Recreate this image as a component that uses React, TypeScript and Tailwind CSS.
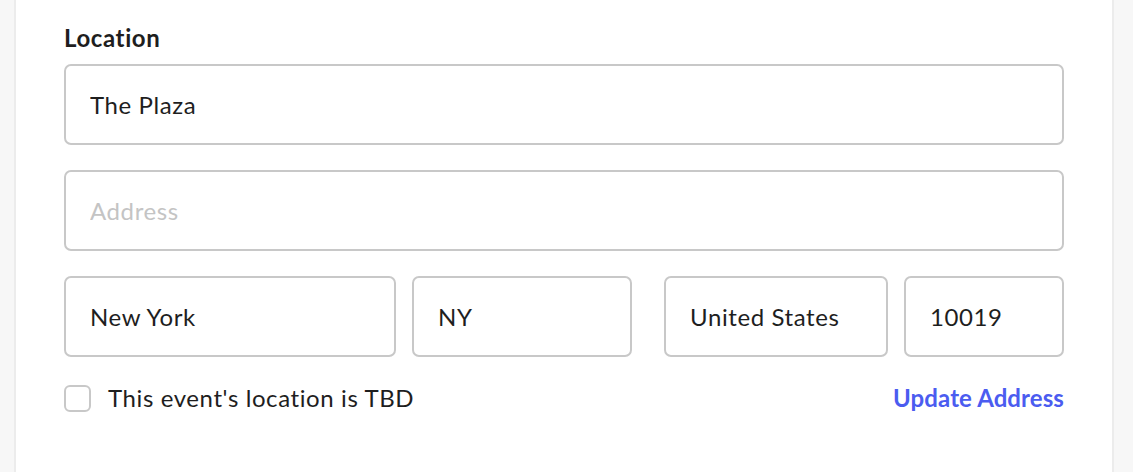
import React, { useState } from "react";

const font = { fontFamily: "Lato, 'Noto Sans', sans-serif" };

function Field({ value, placeholder, className = "" }: { value?: string; placeholder?: string; className?: string }) {
  return (
    <input
      defaultValue={value}
      placeholder={placeholder}
      className={`h-[81px] rounded-[7px] border-2 border-[#c8c8c8] bg-white px-[24px] text-[24px] tracking-[0.6px] text-[#1e1e1e] placeholder:text-[#c4c4c4] outline-none ${className}`}
      style={font}
    />
  );
}

export default function App() {
  const [tbd, setTbd] = useState(false);

  return (
    <div className="min-h-[472px] bg-[#f7f7f7] pl-[14px]" style={font}>
      <div className="w-[1100px] min-h-[472px] bg-white border-x-2 border-[#ececec] px-[48px] pt-[24px]">
        <h3 className="text-[24px] leading-[28px] font-bold tracking-[0.6px] text-[#1e1e1e] mb-[12px]">Location</h3>

        <div className="flex flex-col gap-[25px]">
          <Field value="The Plaza" className="w-full" />
          <Field placeholder="Address" className="w-full" />

          <div className="flex gap-[32px]">
            <div className="flex gap-[16px]">
              <Field value="New York" className="w-[332px]" />
              <Field value="NY" className="w-[220px]" />
            </div>
            <div className="flex gap-[16px]">
              <Field value="United States" className="w-[224px]" />
              <Field value="10019" className="w-[160px]" />
            </div>
          </div>
        </div>

        <div className="mt-[27px] flex items-center justify-between">
          <label className="flex items-center gap-[17px] cursor-pointer">
            <span
              onClick={() => setTbd(!tbd)}
              className={`h-[27px] w-[27px] rounded-[6px] border-2 border-[#c8c8c8] ${tbd ? "bg-[#4b5cf0]" : "bg-white"}`}
            ></span>
            <span className="text-[24px] leading-[28px] tracking-[0.6px] text-[#1e1e1e]">This event's location is TBD</span>
          </label>
          <button className="text-[24px] leading-[28px] font-bold tracking-[0.1px] text-[#4b5cf0] cursor-pointer">Update Address</button>
        </div>
      </div>
    </div>
  );
}
